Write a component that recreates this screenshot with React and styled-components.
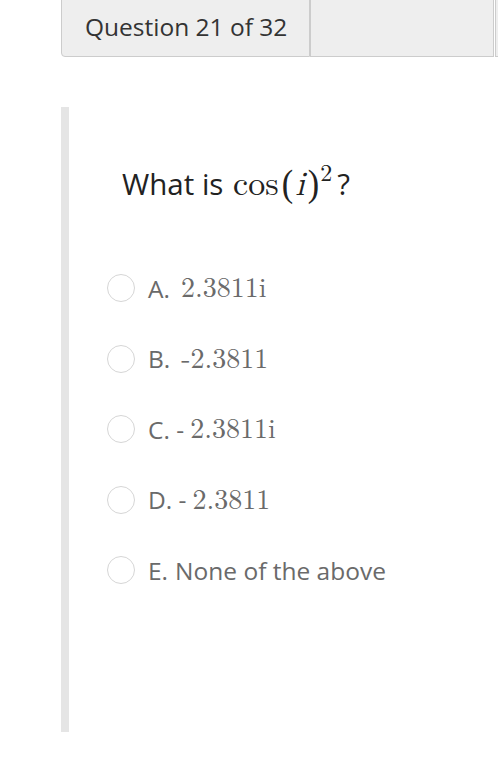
import React, { useState } from "react";
import styled, { createGlobalStyle } from "styled-components";

const GlobalStyle = createGlobalStyle`
  html, body {
    margin: 0;
    padding: 0;
    background: #fff;
    font-family: "Open Sans", "Liberation Sans", sans-serif;
  }
`;

const Page = styled.div`
  width: 498px;
  height: 757px;
  overflow: hidden;
`;

const TabBar = styled.div`
  display: flex;
  padding-left: 61px;
`;

const Tab = styled.div`
  flex: none;
  box-sizing: border-box;
  width: ${(p) => p.width}px;
  height: 58px;
  margin-top: -1px;
  margin-right: ${(p) => p.gap || 0}px;
  background: #eeeeee;
  border: 1px solid #cccccc;
  border-radius: ${(p) => (p.first ? "0 0 0 4px" : "0")};
  display: flex;
  align-items: center;
  padding: 0 0 4px 23px;
  font-size: 24.5px;
  color: #333333;
`;

const Section = styled.div`
  margin: 50px 0 0 61px;
  height: 625px;
  border-left: 8px solid #e5e5e5;
  box-sizing: border-box;
`;

const Prompt = styled.div`
  padding: 55px 0 0 53px;
  height: 40px;
  font-size: 29.5px;
  line-height: 40px;
  color: #222222;
`;

const Math = styled.span`
  font-family: "Latin Modern Math", "Liberation Serif", serif;
  font-size: ${(p) => p.size || 30}px;
  font-style: ${(p) => (p.italic ? "italic" : "normal")};
  line-height: 1;
  margin: 0 ${(p) => p.pad || 0}px;
`;

const Paren = styled.span`
  font-family: "Liberation Serif", serif;
  font-size: 38px;
  line-height: 1;
  display: inline-block;
  transform: scaleX(0.9) translateY(1px);
`;

const Sup = styled.sup`
  vertical-align: 14px;
  line-height: 0;
  margin: 0 5px 0 1px;
`;

const Options = styled.div`
  margin-top: 51px;
  padding-left: 38px;
  display: flex;
  flex-direction: column;
`;

const Option = styled.label`
  display: flex;
  align-items: center;
  height: 70.5px;
  font-size: 24.5px;
  color: #6a6a6a;
  cursor: pointer;
  white-space: pre;
`;

const Radio = styled.span`
  flex: none;
  box-sizing: border-box;
  width: 28px;
  height: 28px;
  border-radius: 50%;
  border: 1px solid ${(p) => (p.checked ? "#888" : "#d6d6d6")};
  background: #fff;
  margin-right: 13px;
  display: flex;
  align-items: center;
  justify-content: center;

  &::after {
    content: "";
    width: 14px;
    height: 14px;
    border-radius: 50%;
    background: ${(p) => (p.checked ? "#666" : "transparent")};
  }
`;

const Letter = styled.span`
  margin-right: ${(p) => p.space}px;
`;

const options = [
  { letter: "A.", space: 11, math: "2.3811i" },
  { letter: "B.", space: 11, math: "-2.3811" },
  { letter: "C. -", space: 6, math: "2.3811i" },
  { letter: "D. -", space: 6, math: "2.3811" },
  { letter: "E.", space: 7, text: "None of the above" },
];

const App = () => {
  const [selected, setSelected] = useState(null);

  return (
    <>
      <GlobalStyle />
      <Page>
        <TabBar>
          <Tab width={249} first>
            Question 21 of 32
          </Tab>
          <Tab width={184} gap={1} />
          <Tab width={40} />
        </TabBar>

        <Section>
          <Prompt>
            What is <Math size={34} pad={2}>cos</Math>
            <Paren>(</Paren>
            <Math size={34} italic pad={2}>
              i
            </Math>
            <Paren>)</Paren>
            <Sup>
              <Math size={24}>2</Math>
            </Sup>
            ?
          </Prompt>

          <Options>
            {options.map((o, i) => (
              <Option key={o.letter} onClick={() => setSelected(i)}>
                <Radio checked={selected === i} />
                <Letter space={o.space}>{o.letter}</Letter>
                {o.math ? <Math size={28}>{o.math}</Math> : o.text}
              </Option>
            ))}
          </Options>
        </Section>
      </Page>
    </>
  );
};

export default App;
